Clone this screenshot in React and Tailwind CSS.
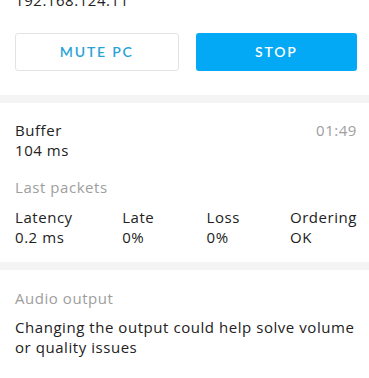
export default function App() {
  const font = { fontFamily: "'Open Sans', Lato, sans-serif" };
  const btnFont = { fontFamily: "Lato, 'Open Sans', sans-serif" };
  return (
    <div className="w-[369px] h-[378px] overflow-hidden bg-white text-[#222] text-[15px] leading-[20px] tracking-[0.55px]" style={font}>
      <div className="pl-[15px] pr-[12px]">
        <div className="-mt-[10px]">192.168.124.11</div>
        <div className="mt-[23px] flex gap-[17px]">
          <button style={btnFont} className="flex-1 h-[38px] rounded-[3px] border border-[#e3e3e3] bg-white text-[#29a3d6] text-[14px] font-semibold tracking-[1.8px]">
            MUTE PC
          </button>
          <button style={btnFont} className="flex-1 h-[38px] rounded-[3px] bg-[#03a9f4] text-white text-[14px] font-semibold tracking-[1.8px]">
            STOP
          </button>
        </div>
      </div>
      <div className="mt-[24px] h-[8px] bg-[#f4f4f4]" />
      <div className="pl-[15px] pr-[12px] pt-[17px] pb-[15px]">
        <div className="flex justify-between">
          <div>
            <div>Buffer</div>
            <div>104 ms</div>
          </div>
          <div className="text-[#9e9e9e]">01:49</div>
        </div>
        <div className="mt-[17px] text-[#9e9e9e]">Last packets</div>
        <div className="mt-[10px] flex">
          <div className="w-[108px]">
            <div>Latency</div>
            <div>0.2 ms</div>
          </div>
          <div className="w-[85px]">
            <div>Late</div>
            <div>0%</div>
          </div>
          <div className="w-[84px]">
            <div>Loss</div>
            <div>0%</div>
          </div>
          <div>
            <div>Ordering</div>
            <div>OK</div>
          </div>
        </div>
      </div>
      <div className="h-[8px] bg-[#f4f4f4]" />
      <div className="pl-[15px] pr-[12px] pt-[18px]">
        <div className="text-[#9e9e9e]">Audio output</div>
        <div className="mt-[9px]">Changing the output could help solve volume or quality issues</div>
      </div>
    </div>
  );
}
